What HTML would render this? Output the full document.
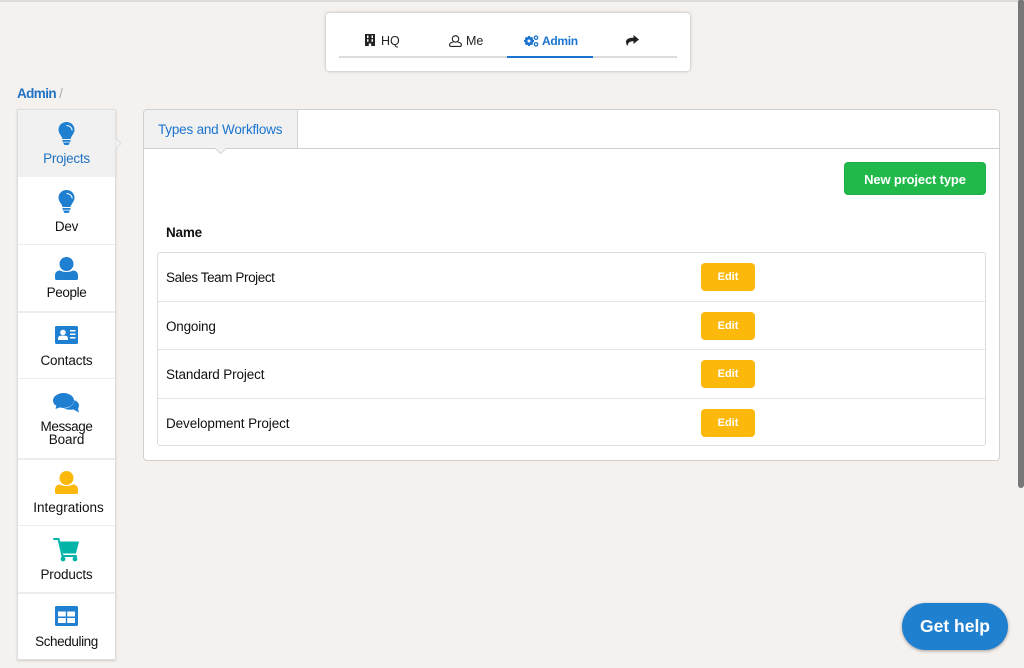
<!DOCTYPE html>
<html><head><meta charset="utf-8"><style>
html,body{margin:0;padding:0;width:1024px;height:668px;overflow:hidden;background:#f4f1ee;font-family:"Liberation Sans",sans-serif;font-size:13.5px;color:#111}
.a{position:absolute;white-space:nowrap;box-sizing:border-box}
.c{text-align:center}
.row{position:absolute;left:158px;width:827px;height:1px;background:#e3e3e3}
.edit{position:absolute;left:701px;width:54px;height:28px;background:#fdb90b;border-radius:4px;color:#fff;font-weight:bold;font-size:11px;line-height:29px;text-align:center}
.nm{position:absolute;left:166px;font-size:13.5px;line-height:16px}
.sep{position:absolute;left:18px;width:97px;height:2px;background:#ececec}
.lb{position:absolute;left:18px;width:97px;text-align:center;line-height:13px;font-size:13.5px;letter-spacing:-.25px}
svg{position:absolute;display:block}
</style></head><body>
<div class="a" style="left:0;top:0;width:1024px;height:2px;background:#dcdcdc"></div>
<div class="a" style="left:1018px;top:0;width:6px;height:488px;background:#777;border-radius:2px 2px 3px 3px"></div>

<!-- top nav -->
<div class="a" style="left:326px;top:13px;width:364px;height:58px;background:#fff;border-radius:3px;box-shadow:0 0 3px rgba(0,0,0,.28)"></div>
<div class="a" style="left:339px;top:56px;width:338px;height:2px;background:#ddd"></div>
<div class="a" style="left:507px;top:56px;width:86px;height:2px;background:#1b75d0"></div>
<svg style="left:365px;top:34px" width="10" height="12" viewBox="0 0 10 12"><path fill="#222" fill-rule="evenodd" d="M0 0h10v12H6.200V9.500H3.800V12H0zM2 1.500v2.500h1.500V1.500zM6.500 1.500v2.500H8V1.500zM2 5.200v2.500h1.500V5.200zM6.500 5.200v2.500H8V5.200z"/></svg>
<div class="a" style="left:381px;top:33px;font-size:12.5px;line-height:16px;color:#222">HQ</div>
<svg style="left:449px;top:35px" width="13" height="12" viewBox="0 0 13 12"><circle cx="6.500" cy="3.900" r="3.200" fill="none" stroke="#222" stroke-width="1.100"/><path fill="none" stroke="#222" stroke-width="1.100" d="M4.500 7C2.500 7.300.6 8.200.6 9.800c0 1 .5 1.600 1.300 1.600h9.200c.8 0 1.300-.6 1.300-1.600 0-1.600-1.900-2.500-3.900-2.800"/></svg>
<div class="a" style="left:466px;top:33px;font-size:12.5px;line-height:16px;color:#222">Me</div>
<svg style="left:524px;top:35px" width="15" height="12" viewBox="0 0 15 12"><circle cx="5" cy="6" r="3.200" fill="none" stroke="#1b75d0" stroke-width="2.200"/><path stroke="#1b75d0" stroke-width="2" d="M5 1v10M0 6h10M1.500 2.500l7 7M8.500 2.500l-7 7"/><circle cx="5" cy="6" r="1.500" fill="#fff"/><circle cx="12" cy="2.700" r="1.700" fill="none" stroke="#1b75d0" stroke-width="1.300"/><circle cx="12" cy="9.300" r="1.700" fill="none" stroke="#1b75d0" stroke-width="1.300"/></svg>
<div class="a" style="left:542px;top:33px;font-size:12px;line-height:16px;color:#1b75d0;font-weight:bold;letter-spacing:-.3px">Admin</div>
<svg style="left:626px;top:35px" width="13" height="11" viewBox="0 0 13 11"><path fill="#222" d="M7.500 0L13 4.500 7.500 9V6.300C4 6.300 2 7.500 1.500 11 .3 9.500 0 8 0 6.800 0 4 3 2.700 7.500 2.700z"/></svg>

<!-- breadcrumb -->
<div class="a" style="left:17px;top:86px;font-size:13.5px;line-height:16px;color:#1f72c4;font-weight:bold;letter-spacing:-.6px">Admin <span style="color:#aaa;font-weight:normal;letter-spacing:0">/</span></div>

<!-- sidebar -->
<div class="a" style="left:17px;top:109px;width:99px;height:551px;background:#fff;border:1px solid #dedede;box-shadow:0 1px 2px rgba(0,0,0,.14)"></div>
<div class="a" style="left:18px;top:110px;width:97px;height:67px;background:#f1f1f1"></div>
<svg style="left:115px;top:137px" width="6" height="13" viewBox="0 0 6 13"><path d="M0 0l6 6.500L0 13z" fill="#f1f1f1" stroke="#ddd"/></svg>
<div class="sep" style="top:244px;height:1px"></div>
<div class="sep" style="top:311px"></div>
<div class="sep" style="top:378px;height:1px"></div>
<div class="sep" style="top:458px"></div>
<div class="sep" style="top:525px;height:1px"></div>
<div class="sep" style="top:592px"></div>

<svg style="left:58px;top:122px" width="17" height="24" viewBox="0 0 17 24"><path fill="#1f7fd1" d="M8.500 0C13 0 16.500 3.300 16.500 7.800 16.500 11.500 13.500 13.500 12.500 17H4.500C3.500 13.500 .5 11.500 .5 7.800 .5 3.300 4 0 8.500 0z"/><path fill="#1f7fd1" d="M4.500 18h8v1.700h-8zM5 20.500h7L10.500 23h-4z"/><path fill="none" stroke="#fff" stroke-width="1" d="M8.500 3.500C11.500 3.500 14 5.500 14.200 8.500"/></svg>
<div class="lb" style="top:152px;color:#1f72c4">Projects</div>
<svg style="left:58px;top:190px" width="17" height="24" viewBox="0 0 17 24"><path fill="#1f7fd1" d="M8.500 0C13 0 16.500 3.300 16.500 7.800 16.500 11.500 13.500 13.500 12.500 17H4.500C3.500 13.500 .5 11.500 .5 7.800 .5 3.300 4 0 8.500 0z"/><path fill="#1f7fd1" d="M4.500 18h8v1.700h-8zM5 20.500h7L10.500 23h-4z"/><path fill="none" stroke="#fff" stroke-width="1" d="M8.500 3.500C11.500 3.500 14 5.500 14.200 8.500"/></svg>
<div class="lb" style="top:220px">Dev</div>
<svg style="left:55px;top:257px" width="23" height="23" viewBox="0 0 23 23"><circle cx="11.500" cy="7" r="7" fill="#1f7fd1"/><path fill="#1f7fd1" d="M0 21.500v-3c0-3 2-5 5-5 1.700 1 3.900 1.500 6.500 1.500s4.800-.5 6.500-1.500c3 0 5 2 5 5v3c0 .9-.6 1.500-1.500 1.500h-20C.6 23 0 22.400 0 21.500z"/></svg>
<div class="lb" style="top:286px;letter-spacing:-.4px">People</div>
<svg style="left:55px;top:326px" width="23" height="18" viewBox="0 0 23 18"><rect width="23" height="18" rx="1.500" fill="#1f7fd1"/><circle cx="8" cy="6.500" r="2.800" fill="#fff"/><path fill="#fff" d="M3 14v-1.500c0-1.600 1.300-2.700 2.700-2.700h4.600c1.400 0 2.700 1.100 2.700 2.700V14z"/><path fill="#fff" d="M15 4h5.500v1.500H15zM15 7.500h5.500V9H15zM15 11h5.500v1.500H15z"/></svg>
<div class="lb" style="top:354px;letter-spacing:-.15px">Contacts</div>
<svg style="left:53px;top:392px" width="27" height="21" viewBox="0 0 27 21"><ellipse cx="10.500" cy="8.500" rx="10.500" ry="7.500" fill="#1f7fd1"/><path fill="#1f7fd1" d="M3.500 13L2.500 17 8 15z"/><path fill="#1f7fd1" d="M21.500 8C24.500 9.500 26 11.500 26 13.500c0 1.200-.4 2-1 2.800l1 4.200-5.500-3c-3.500.5-7.500 0-10-1C16 16.500 21 13 21.500 8z"/></svg>
<div class="lb" style="top:420px;letter-spacing:-.4px">Message<br><span style="letter-spacing:-.1px">Board</span></div>
<svg style="left:55px;top:471px" width="23" height="23" viewBox="0 0 23 23"><circle cx="11.500" cy="7" r="7" fill="#fdb90b"/><path fill="#fdb90b" d="M0 21.500v-3c0-3 2-5 5-5 1.700 1 3.900 1.500 6.500 1.500s4.800-.5 6.500-1.500c3 0 5 2 5 5v3c0 .9-.6 1.500-1.500 1.500h-20C.6 23 0 22.400 0 21.500z"/></svg>
<div class="lb" style="top:501px;left:20px;letter-spacing:0">Integrations</div>
<svg style="left:53px;top:538px" width="27" height="24" viewBox="0 0 27 24"><path fill="#02b3a7" d="M7 3.500H26L23 15.500H10z"/><path fill="none" stroke="#02b3a7" stroke-width="2" stroke-linecap="round" d="M1 1H5.500L9.500 18H23"/><circle cx="10" cy="21" r="2.400" fill="#02b3a7"/><circle cx="22" cy="21" r="2.400" fill="#02b3a7"/></svg>
<div class="lb" style="top:568px;letter-spacing:-.15px">Products</div>
<svg style="left:55px;top:606px" width="23" height="20" viewBox="0 0 23 20"><rect width="23" height="20" rx="1.500" fill="#1f7fd1"/><path fill="#fff" d="M3 5.500h7.800v5H3zM12.200 5.500H20v5h-7.800zM3 12h7.800v5H3zM12.200 12H20v5h-7.800z"/></svg>
<div class="lb" style="top:635px;letter-spacing:-.4px">Scheduling</div>

<!-- panel -->
<div class="a" style="left:143px;top:109px;width:857px;height:352px;background:#fff;border:1px solid #d0d0d0;border-radius:4px"></div>
<div class="a" style="left:144px;top:110px;width:154px;height:38px;background:#f1f1f1;border-right:1px solid #d4d4d4;border-radius:3px 0 0 0"></div>
<div class="a" style="left:144px;top:148px;width:855px;height:1px;background:#cfcfcf"></div>
<svg style="left:215px;top:148px" width="11" height="6" viewBox="0 0 11 6"><path d="M0 0l5.500 5.500L11 0z" fill="#f1f1f1"/><path d="M0 .5l5.500 5L11 .5" fill="none" stroke="#d6d6d6"/></svg>
<div class="a" style="left:158px;top:122px;font-size:13.5px;line-height:16px;color:#1b75d0;letter-spacing:-.2px">Types and Workflows</div>

<div class="a c" style="left:844px;top:162px;width:142px;height:33px;background:#21b94a;border:1px solid #1eae44;border-radius:4px;color:#fff;font-weight:bold;font-size:13px;line-height:33px;letter-spacing:-.15px">New project type</div>

<div class="a" style="left:166px;top:225px;font-size:13.5px;line-height:16px;font-weight:bold;letter-spacing:-.2px">Name</div>

<div class="a" style="left:157px;top:252px;width:829px;height:194px;border:1px solid #dcdcdc;border-radius:3px"></div>
<div class="row" style="top:301px"></div>
<div class="row" style="top:349px"></div>
<div class="row" style="top:398px"></div>
<div class="nm" style="top:270px;letter-spacing:-.42px">Sales Team Project</div>
<div class="nm" style="top:319px;letter-spacing:-.2px">Ongoing</div>
<div class="nm" style="top:367px;letter-spacing:-.14px">Standard Project</div>
<div class="nm" style="top:416px;letter-spacing:-.1px">Development Project</div>
<div class="edit" style="top:263px">Edit</div>
<div class="edit" style="top:312px">Edit</div>
<div class="edit" style="top:360px">Edit</div>
<div class="edit" style="top:409px">Edit</div>

<!-- help -->
<div class="a c" style="left:902px;top:603px;width:106px;height:47px;background:#1f80cf;border-radius:24px;color:#fff;font-weight:bold;font-size:17.5px;line-height:47px;box-shadow:0 1px 3px rgba(0,0,0,.35)">Get help</div>
</body></html>
